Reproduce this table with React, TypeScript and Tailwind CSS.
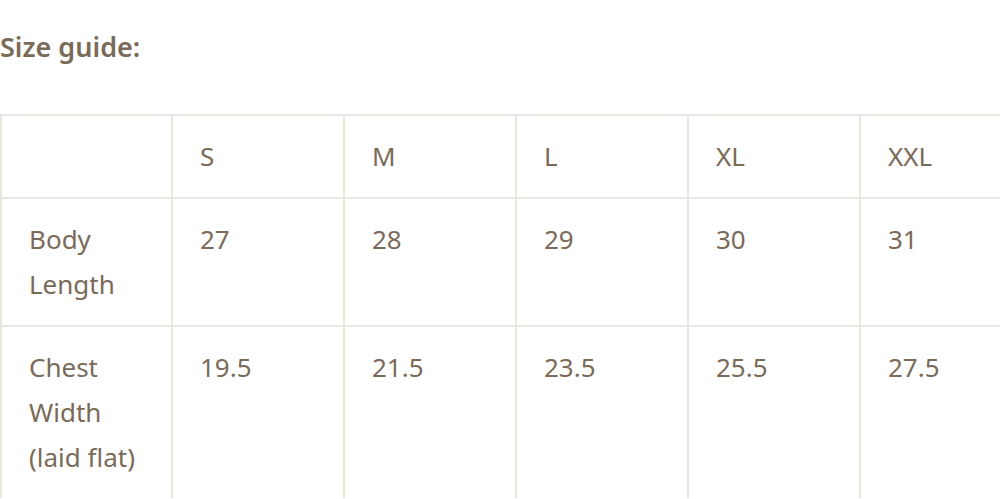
const sizes = ['S', 'M', 'L', 'XL', 'XXL'];

const rows = [
  { label: ['Body', 'Length'], values: ['27', '28', '29', '30', '31'] },
  { label: ['Chest', 'Width', '(laid flat)'], values: ['19.5', '21.5', '23.5', '25.5', '27.5'] },
];

function Cell({ children }: { children?: React.ReactNode }) {
  return (
    <div className="border-l-2 border-t-2 border-[#e8e8e1] px-[27px] py-[18px] leading-[45px]">
      {children}
    </div>
  );
}

export default function App() {
  return (
    <div
      className="w-[1000px] h-[499px] overflow-hidden bg-white text-[#7a6a58]"
      style={{ fontFamily: '"Noto Sans", sans-serif' }}
    >
      <h3 className="pt-[29px] text-[27px] font-semibold leading-[36px] text-[#7a6a58]">Size guide:</h3>

      <div className="mt-[49px] grid grid-cols-[171px_repeat(5,172px)] text-[26px]">
        <Cell />
        {sizes.map((s) => (
          <Cell key={s}>{s}</Cell>
        ))}
        {rows.map((row) => (
          <>
            <Cell key={row.label.join('-')}>
              {row.label.map((l) => (
                <div key={l}>{l}</div>
              ))}
            </Cell>
            {row.values.map((v, i) => (
              <Cell key={row.label[0] + i}>{v}</Cell>
            ))}
          </>
        ))}
      </div>
    </div>
  );
}
